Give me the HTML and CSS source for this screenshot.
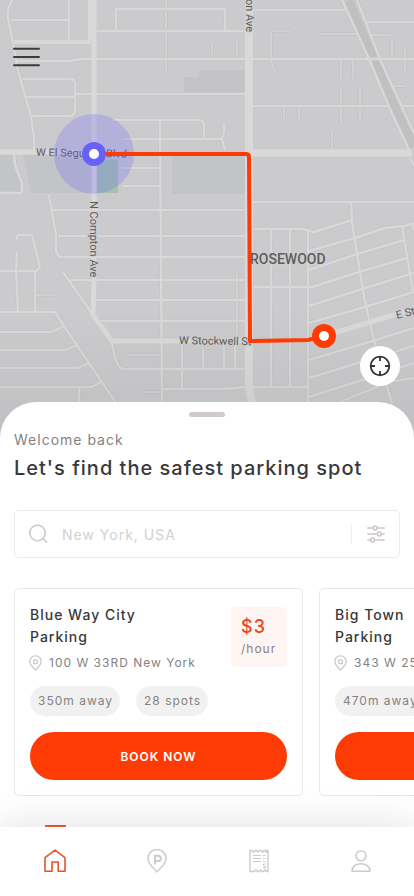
FILE: index.html
```html
<!DOCTYPE html>
<html lang="en">
<head>
	<meta charset="utf-8">
	<meta name="viewport" content="width=device-width, initial-scale=1">
	<title>Safe Parking</title>
	<link rel="stylesheet" href="styles.css">
</head>
<body>
	<div class="map">
		<svg class="map_canvas" viewBox="0 0 414 442" preserveAspectRatio="xMidYMin slice" role="img" aria-label="Route map">
			<defs>
				<linearGradient id="fade" x1="0" y1="0" x2="0" y2="1">
					<stop offset="0.7" stop-color="#000" stop-opacity="0"/>
					<stop offset="1" stop-color="#000" stop-opacity="0.06"/>
				</linearGradient>
				<!-- every road, drawn twice: edge then surface -->
				<g id="small_roads">
					<path d="M12 0C8 8 7 12 8 18L13 43L17 67L24 92L31 116L34 137V150M11 20H69M69 0V41M17 61H70L80 59H414M97 31H245M116 30V9H225V31M22 79H70Q75 79 75 84V110Q75 116 70 116H31M26 97H72L77 94H245"/>
					<path d="M14 154L15 165L22 183V193H0M113 120H200Q204 120 204 126V138M122 139H222L224 132V125M222 139L225 150M160 120L162 402M122 168H160M122 186H160"/>
					<path d="M49 195L56 235V250Q57 257 62 257H245M53 210H245M58 236H245M70 280H245M95 300H245M98 321H245M63 272L93 315M112 343L115 358Q117 365 122 369H245M182 345V388M203 348V368M224 345V368M235 345V368M163 389H225L245 387"/>
					<path d="M16 241L18 235H32L40 267L36 271H0M17 252L16 271L18 311M35 271V311M0 312H55L64 326L116 403M0 332H52L64 326M0 350H66L77 345M0 368H78L89 363M0 387H92L102 381M79 387V410"/>
					<path d="M253 10H345M367 22H414M253 106H387M402 106H414M253 202H414M410 158L414 166M351 203L352 222L364 297L374 340L392 404M254 229H303L314 232L352 220M271 229V386M290 229V386M308 230V410M253 387H308"/>
					<path d="M309 251L355 238L385 228L402 226L413 292M309 270L357 254L404 240M254 287H312L359 272L407 258M309 306L362 289L414 273M309 323L365 307L414 292M309 360L369 342L414 328M309 378L414 346M309 397L384 373L414 363M340 402L389 382L414 378M411 223L414 230M402 227L414 223"/>
					<path d="M342 0L369 59L389 107L409 150M357 0L380 59L402 107L414 133"/>
				</g>
				<g id="stubs">
					<path d="M166 0V74M290 31H273Q271 31 271 34V62L276 74M319 34H357M372 35H390M212 45V57M237 42V57M341 60V78M353 60V78M392 42V58M405 48V74M394 86H404M341 87V123M360 88V122M284 107V121M299 107V121M332 132V149M237 271V342M127 355H160M141 392H160M36 295H55"/>
				</g>
			</defs>
			<rect width="414" height="442" fill="#cbcbcd"/>
			<g fill="#c2c4c6">
				<path d="M184 77H199V70H245V93H184ZM172 156H245V194H172ZM23 155H118V193H31ZM0 155H14L22 183V192H0Z"/>
			</g>
			<path d="M97 160H118V193H97Z" fill="#a5c4ab"/>
			<path d="M349 0L374 59L395 107L414 147" fill="none" stroke="#bfc0c2" stroke-width="8"/>
			<g fill="none" stroke-linejoin="round">
				<use href="#small_roads" stroke="#c5c5c7" stroke-width="4"/>
				<use href="#stubs" stroke="#c5c5c7" stroke-width="4"/>
				<use href="#small_roads" stroke="#d8d8d8" stroke-width="2.400"/>
				<use href="#stubs" stroke="#d2d2d3" stroke-width="2"/>
				<path d="M90 0V41M14 42H91" stroke="#d8d8d8" stroke-width="4"/>
				<path d="M94 0V278L93 315L112 341H249M0 152H94M324 336L414 309" stroke="#d9d9d9" stroke-width="5"/>
				<path d="M253 153H412" stroke="#d9d9d9" stroke-width="7"/>
				<path d="M249 0V385L253 410" stroke="#d9d9d9" stroke-width="8"/>
			</g>
			<g class="street">
				<text x="36" y="156" transform="rotate(1 36 156)">W El Segundo Blvd</text>
				<text x="179" y="344" transform="rotate(1 179 344)">W Stockwell St</text>
				<text transform="translate(90 201) rotate(90)">N Compton Ave</text>
				<text transform="translate(246 32) rotate(90)" text-anchor="end">on Ave</text>
				<text transform="translate(397 319) rotate(-14)">E St</text>
			</g>
			<text class="district" x="250" y="264">ROSEWOOD</text>
			<rect width="414" height="442" fill="url(#fade)"/>
			<!-- route -->
			<circle cx="94" cy="154" r="40" fill="#6c5fff" fill-opacity="0.25"/>
			<path d="M94 154H246Q249 154 249 157L250 341L308 340L324 336" fill="none" stroke="#ff3b05" stroke-width="4" stroke-linejoin="round"/>
			<circle cx="94" cy="154" r="12" fill="#6761fa"/>
			<circle cx="94" cy="154" r="5" fill="#fff"/>
			<circle cx="324" cy="336" r="12" fill="#ff3b05"/>
			<circle cx="324" cy="336" r="5" fill="#fff"/>
		</svg>
		<button class="menu_btn" type="button" aria-label="Menu">
			<svg width="28" height="20" viewBox="0 0 28 20" fill="none" stroke="#3d3b3c" stroke-width="2" stroke-linecap="round"><path d="M2 1.700H27M2 10H27M2 18.300H27"/></svg>
		</button>
		<button class="locate_btn" type="button" aria-label="My location">
			<svg width="22" height="22" viewBox="0 0 22 22" fill="none" stroke="#353334" stroke-width="1.800"><circle cx="11" cy="11" r="9.300"/><path d="M11 1.700V6M11 16V20.300M1.700 11H6M16 11H20.300"/></svg>
		</button>
	</div>

	<main class="sheet">
		<div class="handle"></div>
		<p class="welcome">Welcome back</p>
		<h1>Let's find the safest parking spot</h1>

		<form class="search">
			<svg width="20" height="20" viewBox="0 0 20 20" fill="none" stroke="#cdc8c9" stroke-width="1.600" stroke-linecap="round"><circle cx="9.500" cy="9" r="7.700"/><path d="M15 14.500L18.500 18"/></svg>
			<input type="text" aria-label="Search location" placeholder="New York, USA">
			<button class="filter_btn" type="button" aria-label="Filters">
				<svg width="18" height="18" viewBox="0 0 18 18" fill="none" stroke="#cdc8c9" stroke-width="1.500" stroke-linecap="round"><path d="M.8 3H6.200M10.200 3H17.200M.8 9H10.400M14.400 9H17.200M.8 15H3.500M7.500 15H17.200"/><circle cx="8.200" cy="3" r="1.900"/><circle cx="12.400" cy="9" r="1.900"/><circle cx="5.500" cy="15" r="1.900"/></svg>
			</button>
		</form>

		<div class="cards">
			<article class="card">
				<div class="card_top">
					<div>
						<h2>Blue Way City Parking</h2>
						<p class="address">
							<svg width="13" height="16" viewBox="0 0 13 16" fill="none" stroke="#cdc8c9" stroke-width="1.300"><path d="M6.500 15C4.500 12.800.8 9.800.8 6.500A5.700 5.700 0 0 1 12.200 6.500C12.200 9.800 8.500 12.800 6.500 15Z"/><circle cx="6.500" cy="6.700" r="2"/></svg>
							100 W 33RD New York
						</p>
					</div>
					<p class="price"><strong>$3</strong><span>/hour</span></p>
				</div>
				<div class="chips"><span>350m away</span><span>28 spots</span></div>
				<button class="book_btn" type="button">BOOK NOW</button>
			</article>
			<article class="card">
				<div class="card_top">
					<div>
						<h2>Big Town Parking</h2>
						<p class="address">
							<svg width="13" height="16" viewBox="0 0 13 16" fill="none" stroke="#cdc8c9" stroke-width="1.300"><path d="M6.500 15C4.500 12.800.8 9.800.8 6.500A5.700 5.700 0 0 1 12.200 6.500C12.200 9.800 8.500 12.800 6.500 15Z"/><circle cx="6.500" cy="6.700" r="2"/></svg>
							343 W 25TH New York
						</p>
					</div>
				</div>
				<div class="chips"><span>470m away</span></div>
				<button class="book_btn" type="button">BOOK NOW</button>
			</article>
		</div>
	</main>

	<nav class="tabs">
		<a class="active" href="#home" aria-label="Home">
			<svg width="24" height="24" viewBox="0 0 24 24" fill="none" stroke="currentColor" stroke-width="1.600" stroke-linejoin="round"><path d="M2 22.200V8.700L12 1.200L22 8.700V22.200H15.200V13H9V22.200Z"/></svg>
		</a>
		<a href="#parking" aria-label="Parking">
			<svg width="24" height="24" viewBox="0 0 24 24" fill="none" stroke="currentColor" stroke-width="1.500"><path d="M12 22.800C8.500 19 3 15 3 9.500A9 9 0 0 1 21 9.500C21 15 15.500 19 12 22.800Z"/><path d="M10 15.500V6.800H13.200A2.500 2.500 0 0 1 13.200 12H10" stroke-width="2"/></svg>
		</a>
		<a href="#tickets" aria-label="Tickets">
			<svg width="24" height="24" viewBox="0 0 24 24" fill="none" stroke="currentColor" stroke-width="1.400"><path d="M3 1.500H5L6.500 3.200L8 1.500H9.500L11 3.200L12.500 1.500H14L15.500 3.200L17 1.500H18L19.300 3.200L20 1.500H21V22.500H19.500L18 20.800L16.500 22.500H15L13.500 20.800L12 22.500H10.500L9 20.800L7.500 22.500H3Z"/><path d="M6 6.500H14M6 9.500H14M6 12.500H14M16 6.500H18.500M16 9.500H18.500M16 12.500H18.500M18.500 15H16.500V17H18.500V19H16" stroke-width="1"/></svg>
		</a>
		<a href="#profile" aria-label="Profile">
			<svg width="24" height="24" viewBox="0 0 24 24" fill="none" stroke="currentColor" stroke-width="1.600" stroke-linejoin="round"><circle cx="12" cy="6.800" r="5"/><path d="M3 22.200C3 17.500 7 14.700 12 14.700S21 17.500 21 22.200Z"/></svg>
		</a>
	</nav>
</body>
</html>
```
FILE: styles.css
```css
* {
	box-sizing: border-box;
}
body {
	display: flex;
	flex-direction: column;
	min-height: 100vh;
	margin: 0;
	font-family: Inter, sans-serif;
	letter-spacing: 1px;
	color: #3a3839;
	background-color: #fff;
}
h1, h2, p {
	margin: 0;
	font-weight: 400;
}
button {
	padding: 0;
	border: 0;
	font: inherit;
	letter-spacing: inherit;
	background: none;
	cursor: pointer;
}
svg {
	display: block;
	flex: none;
}

/* map */
.map {
	position: relative;
	flex: 1 0 300px;
	display: flex;
	margin-bottom: -40px;
	padding-bottom: 40px;
	overflow: hidden;
	background-color: #cbcbcd;
}
.map_canvas {
	position: absolute;
	top: 0;
	left: 0;
	width: 100%;
	height: 100%;
}
.street, .district {
	font-family: Roboto, sans-serif;
	font-size: 11px;
	letter-spacing: 0;
	fill: #5c5d5e;
	stroke: #cfcfd0;
	stroke-width: 2px;
	paint-order: stroke;
}
.district {
	font-size: 14px;
	font-weight: 500;
}
.menu_btn {
	position: absolute;
	top: 47px;
	left: 12px;
}
.locate_btn {
	position: absolute;
	right: 14px;
	bottom: 56px;
	display: flex;
	align-items: center;
	justify-content: center;
	width: 40px;
	height: 40px;
	border-radius: 50%;
	background-color: #fff;
}

/* bottom sheet */
.sheet {
	position: relative;
	padding: 10px 14px 31px;
	border-radius: 36px 36px 0 0;
	background-color: #fff;
}
.handle {
	width: 36px;
	height: 5px;
	margin: 0 auto 13px;
	border-radius: 3px;
	background-color: #d0cacb;
}
.welcome {
	font-size: 14px;
	line-height: 20px;
	color: #858283;
}
h1 {
	margin-top: 4px;
	font-size: 20px;
	font-weight: 500;
	line-height: 28px;
}
.search {
	display: flex;
	align-items: center;
	height: 48px;
	margin: 28px 0 30px;
	padding: 0 14px 0 13px;
	border: 1px solid #ebebeb;
	border-radius: 5px;
}
.search input {
	flex: 1;
	min-width: 0;
	margin-left: 14px;
	padding: 0;
	border: 0;
	outline: 0;
	font: inherit;
	font-size: 14px;
	letter-spacing: inherit;
	color: #3a3839;
}
.search input::placeholder {
	color: #d3d0d1;
}
.filter_btn {
	padding: 1px 0 1px 15px;
	border-left: 1px solid #efefef;
}

/* parking cards */
.cards {
	display: flex;
	gap: 16px;
	margin-right: -14px;
	overflow-x: auto;
	scrollbar-width: none;
}
.card {
	flex: 0 0 289px;
	padding: 15px;
	border: 1px solid #e8e8e8;
	border-radius: 5px;
}
.card_top {
	display: flex;
	justify-content: space-between;
	align-items: flex-start;
}
h2 {
	max-width: 124px;
	font-size: 14px;
	font-weight: 500;
	line-height: 22px;
}
.address {
	display: flex;
	align-items: center;
	gap: 7px;
	margin: 5px 0 13px -1px;
	font-size: 12px;
	line-height: 20px;
	color: #858283;
	white-space: nowrap;
}
.price {
	display: flex;
	flex-direction: column;
	width: 56px;
	margin-top: 3px;
	padding: 8px 10px;
	border-radius: 5px;
	font-size: 12px;
	line-height: 20px;
	color: #858283;
	background-color: #fff5f2;
}
.price strong {
	font-size: 18px;
	font-weight: 500;
	line-height: 24px;
	color: #e8461a;
}
.chips {
	display: flex;
	gap: 16px;
	margin-bottom: 16px;
}
.chips span {
	padding: 0 7px 0 8px;
	border-radius: 15px;
	font-size: 12px;
	line-height: 30px;
	color: #858283;
	background-color: #f1f1f1;
}
.book_btn {
	display: block;
	width: 100%;
	height: 48px;
	border-radius: 24px;
	font-size: 12px;
	font-weight: 600;
	color: #fff;
	background-color: #ff3b05;
}

/* tab bar */
.tabs {
	position: sticky;
	bottom: 0;
	display: flex;
	padding: 0 2px 0 4px;
	background-color: #fff;
	box-shadow: 0 0 40px rgba(0, 0, 0, 0.13);
}
.tabs a {
	position: relative;
	flex: 1;
	display: flex;
	justify-content: center;
	padding: 22px 0 23px;
	color: #d0cacb;
}
.tabs .active {
	color: #e8532b;
}
.tabs .active::before {
	content: '';
	position: absolute;
	top: -2px;
	width: 21px;
	height: 2px;
	background-color: #e8532b;
}
```
